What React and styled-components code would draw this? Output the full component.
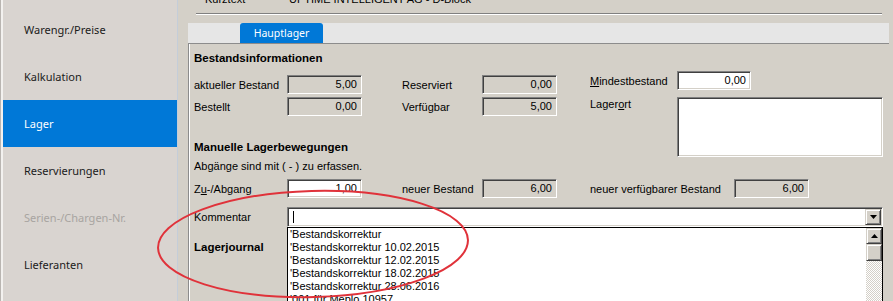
import React from "react";
import styled, { createGlobalStyle } from "styled-components";

const GlobalStyle = createGlobalStyle`
  html, body { margin: 0; padding: 0; }
  body {
    width: 893px;
    height: 301px;
    overflow: hidden;
    background: #d4d0c8;
    font-family: "Liberation Sans", Arial, sans-serif;
    color: #000;
  }
  * { box-sizing: border-box; }
`;

const Screen = styled.div`
  position: relative;
  display: flex;
  width: 893px;
  height: 301px;
  overflow: hidden;
`;

/* ---------- sidebar ---------- */
const Sidebar = styled.nav`
  flex: none;
  width: 178px;
  padding: 6px 0 0 3px;
  background: #d9d4d0;
  border-right: 1px solid #c4cdd9;
  box-shadow: inset 1px 0 #b9b5b1, inset 3px 0 #f3f1ef;
  display: flex;
  flex-direction: column;
`;

const NavItem = styled.div`
  height: 47px;
  display: flex;
  align-items: center;
  padding-left: 21px;
  font-family: "Noto Sans", "Open Sans", sans-serif;
  font-size: 11px;
  color: ${(p) => (p.$active ? "#ffffff" : p.$disabled ? "#a8a4a1" : "#1b1b1b")};
  background: ${(p) => (p.$active ? "#0078d7" : "transparent")};
`;

/* ---------- main ---------- */
const Main = styled.main`
  flex: 1;
  min-width: 0;
  display: flex;
  flex-direction: column;
  background: #d4d0c8;
`;

const HeaderRow = styled.div`
  display: flex;
  margin: -7px 0 0 27px;
  height: 13px;
  line-height: 13px;
  font-size: 11px;
  white-space: nowrap;
`;

const HeaderLabel = styled.span`
  width: 84px;
`;

const Separator = styled.div`
  margin: 7px 11px 0 18px;
  height: 2px;
  border-top: 1px solid #808080;
  border-bottom: 1px solid #ffffff;
`;

const TabStrip = styled.div`
  margin: 8px 4px 0 10px;
  height: 21px;
  background: #e6e6e6;
  border-bottom: 1px solid #8c8c8c;
  display: flex;
  padding-left: 52px;
`;

const Tab = styled.div`
  width: 83px;
  height: 20px;
  background: #0078d7;
  border-radius: 3px 3px 0 0;
  color: #fff;
  font-family: "Noto Sans", "Open Sans", sans-serif;
  font-size: 10.5px;
  display: flex;
  align-items: center;
  justify-content: center;
`;

const Panel = styled.section`
  flex: 1;
  margin: 0 4px 0 10px;
  border-left: 1px solid #8c8c8c;
  box-shadow: inset 1px 0 #ffffff;
  padding: 7px 0 0 5px;
  font-size: 11px;
  line-height: 14px;
`;

const Title = styled.div`
  font-weight: bold;
  font-size: 11.5px;
  line-height: 14px;
  white-space: nowrap;
  margin-top: ${(p) => p.$mt || 0}px;
`;

const Note = styled.div`
  margin-top: 5px;
  white-space: nowrap;
`;

const UpperArea = styled.div`
  display: flex;
  align-items: flex-start;
  margin-top: 6px;
`;

const LeftCol = styled.div`
  width: 363px;
  flex: none;
  padding-top: 4px;
`;

const FieldGrid = styled.div`
  display: grid;
  grid-template-columns: ${(p) => p.$cols};
  grid-auto-rows: ${(p) => p.$rows || "19px"};
  row-gap: ${(p) => p.$gap || 3}px;
  align-items: center;
  margin-top: ${(p) => p.$mt || 0}px;
`;

const RightCol = styled.div`
  margin-left: 33px;
`;

const Label = styled.span`
  white-space: nowrap;
  align-self: ${(p) => (p.$top ? "start" : "center")};
`;

const U = styled.span`
  text-decoration: underline;
  text-underline-offset: 1px;
`;

const Field = styled.div`
  width: ${(p) => p.$w || 75}px;
  height: ${(p) => p.$h || 19}px;
  border: 1px solid;
  border-color: #808080 #ffffff #ffffff #808080;
  box-shadow: inset 1px 1px #404040, inset -1px -1px #d4d0c8;
  background: ${(p) => (p.$editable ? "#ffffff" : "#d4d0c8")};
  text-align: right;
  padding-right: 4px;
  line-height: 17px;
  font-size: 11px;
`;

const CommentRow = styled.div`
  display: flex;
  align-items: center;
  margin-top: 9px;
`;

const CommentLabel = styled.span`
  width: 93px;
  flex: none;
`;

const ComboWrap = styled.div`
  position: relative;
  width: 596px;
`;

const Combo = styled.div`
  width: 596px;
  height: 20px;
  border: 1px solid;
  border-color: #808080 #ffffff #ffffff #808080;
  box-shadow: inset 1px 1px #404040, inset -1px -1px #d4d0c8;
  background: #fff;
  display: flex;
  align-items: center;
  justify-content: space-between;
  padding: 1px 1px 1px 5px;
`;

const Caret = styled.span`
  width: 1px;
  height: 12px;
  background: #000;
`;

const RaisedButton = styled.div`
  width: 16px;
  height: ${(p) => p.$h || 16}px;
  flex: none;
  background: #d4d0c8;
  border: 1px solid;
  border-color: #d4d0c8 #404040 #404040 #d4d0c8;
  box-shadow: inset 1px 1px #ffffff, inset -1px -1px #808080;
  display: flex;
  align-items: center;
  justify-content: center;
`;

const DropList = styled.div`
  position: absolute;
  top: 100%;
  left: 0;
  width: 596px;
  height: 90px;
  border: 1px solid #000;
  background: #fff;
  display: flex;
  z-index: 2;
`;

const ListItems = styled.div`
  flex: 1;
  padding-left: 2px;
  font-size: 11px;
  line-height: 13px;
  white-space: nowrap;
`;

const Scrollbar = styled.div`
  width: 16px;
  flex: none;
  display: flex;
  flex-direction: column;
`;

const Track = styled.div`
  flex: 1;
  background-color: #ffffff;
  background-image: repeating-conic-gradient(#d4d0c8 0 25%, #ffffff 0 50%);
  background-size: 2px 2px;
`;

const Highlight = styled.svg`
  position: absolute;
  left: 0;
  top: 0;
  pointer-events: none;
  z-index: 5;
`;

const Arrow = ({ up }) => (
  <svg width="7" height="4" viewBox="0 0 7 4">
    <path d={up ? "M3.5 0 L7 4 L0 4 Z" : "M0 0 L7 0 L3.5 4 Z"} fill="#000" />
  </svg>
);

const navItems = [
  { label: "Warengr./Preise" },
  { label: "Kalkulation" },
  { label: "Lager", active: true },
  { label: "Reservierungen" },
  { label: "Serien-/Chargen-Nr.", disabled: true },
  { label: "Lieferanten" },
];

const listEntries = [
  "'Bestandskorrektur",
  "'Bestandskorrektur 10.02.2015",
  "'Bestandskorrektur 12.02.2015",
  "'Bestandskorrektur 18.02.2015",
  "'Bestandskorrektur 28.06.2016",
  "'001 für Meplo 10957",
];

export default function App() {
  return (
    <>
      <GlobalStyle />
      <Screen>
        <Sidebar>
          {navItems.map((it) => (
            <NavItem key={it.label} $active={it.active} $disabled={it.disabled}>
              {it.label}
            </NavItem>
          ))}
        </Sidebar>
        <Main>
          <HeaderRow>
            <HeaderLabel>Kurztext</HeaderLabel>
            <span>UPTIME INTELLIGENT AG - D-Block</span>
          </HeaderRow>
          <Separator />
          <TabStrip>
            <Tab>Hauptlager</Tab>
          </TabStrip>
          <Panel>
            <Title>Bestandsinformationen</Title>
            <UpperArea>
              <LeftCol>
                <FieldGrid $cols="93px 75px 40px 80px 75px">
                  <Label>aktueller Bestand</Label>
                  <Field>5,00</Field>
                  <span />
                  <Label>Reserviert</Label>
                  <Field>0,00</Field>
                  <Label>Bestellt</Label>
                  <Field>0,00</Field>
                  <span />
                  <Label>Verfügbar</Label>
                  <Field>5,00</Field>
                </FieldGrid>
                <Title $mt={24}>Manuelle Lagerbewegungen</Title>
                <Note>Abgänge sind mit ( - ) zu erfassen.</Note>
              </LeftCol>
              <RightCol>
                <FieldGrid $cols="87px 206px" $rows="19px 60px" $gap={7}>
                  <Label>
                    <U>M</U>indestbestand
                  </Label>
                  <Field $editable $w={74}>0,00</Field>
                  <Label $top>
                    Lager<U>o</U>rt
                  </Label>
                  <Field $editable $w={206} $h={60} />
                </FieldGrid>
              </RightCol>
            </UpperArea>
            <FieldGrid $cols="93px 75px 40px 80px 75px 33px 144px 75px" $mt={6}>
              <Label>
                Z<U>u</U>-/Abgang
              </Label>
              <Field $editable>1,00</Field>
              <span />
              <Label>neuer Bestand</Label>
              <Field>6,00</Field>
              <span />
              <Label>neuer verfügbarer Bestand</Label>
              <Field>6,00</Field>
            </FieldGrid>
            <CommentRow>
              <CommentLabel>Kommentar</CommentLabel>
              <ComboWrap>
                <Combo>
                  <Caret />
                  <RaisedButton>
                    <Arrow />
                  </RaisedButton>
                </Combo>
                <DropList>
                  <ListItems>
                    {listEntries.map((e) => (
                      <div key={e}>{e}</div>
                    ))}
                  </ListItems>
                  <Scrollbar>
                    <RaisedButton>
                      <Arrow up />
                    </RaisedButton>
                    <RaisedButton $h={17} />
                    <Track />
                  </Scrollbar>
                </DropList>
              </ComboWrap>
            </CommentRow>
            <Title $mt={13}>Lagerjournal</Title>
          </Panel>
        </Main>
        <Highlight width="893" height="301" viewBox="0 0 893 301">
          <ellipse
            cx="313"
            cy="244"
            rx="155"
            ry="53"
            transform="rotate(-1.5 313 244)"
            fill="none"
            stroke="#e0323a"
            strokeWidth="2"
          />
        </Highlight>
      </Screen>
    </>
  );
}
